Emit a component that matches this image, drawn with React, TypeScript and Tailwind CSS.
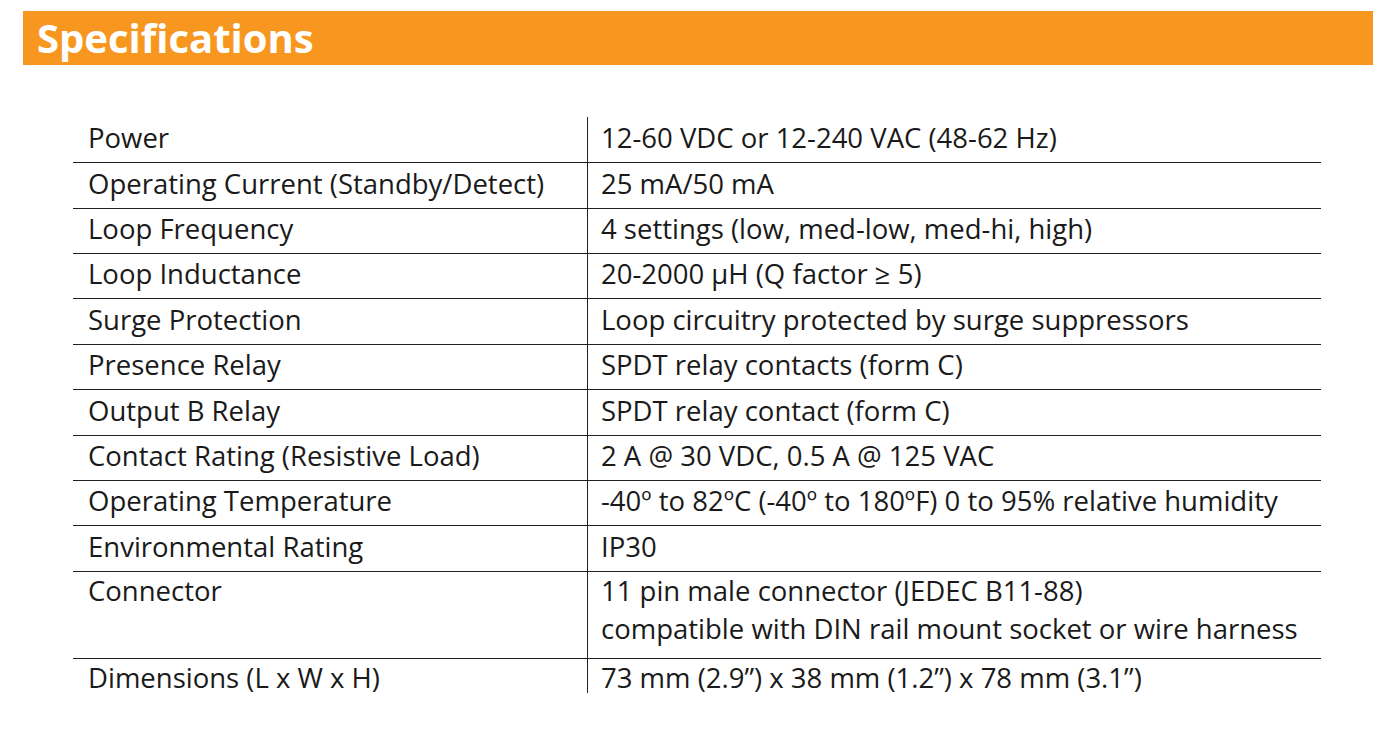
import React from 'react';

// row heights include the 1px bottom rule
const specs: { label: string; value: string[]; h: string }[] = [
    { label: 'Power', value: ['12-60 VDC or 12-240 VAC (48-62 Hz)'], h: 'h-[46px]' },
    { label: 'Operating Current (Standby/Detect)', value: ['25 mA/50 mA'], h: 'h-[46px]' },
    { label: 'Loop Frequency', value: ['4 settings (low, med-low, med-hi, high)'], h: 'h-[45px]' },
    { label: 'Loop Inductance', value: ['20-2000 µH (Q factor ≥ 5)'], h: 'h-[45px]' },
    { label: 'Surge Protection', value: ['Loop circuitry protected by surge suppressors'], h: 'h-[46px]' },
    { label: 'Presence Relay', value: ['SPDT relay contacts (form C)'], h: 'h-[45px]' },
    { label: 'Output B Relay', value: ['SPDT relay contact (form C)'], h: 'h-[46px]' },
    { label: 'Contact Rating (Resistive Load)', value: ['2 A @ 30 VDC, 0.5 A @ 125 VAC'], h: 'h-[45px]' },
    { label: 'Operating Temperature', value: ['-40º to 82ºC (-40º to 180ºF) 0 to 95% relative humidity'], h: 'h-[45px]' },
    { label: 'Environmental Rating', value: ['IP30'], h: 'h-[46px]' },
    {
        label: 'Connector',
        value: ['11 pin male connector (JEDEC B11-88)', 'compatible with DIN rail mount socket or wire harness'],
        h: 'h-[87px]',
    },
    { label: 'Dimensions (L x W x H)', value: ['73 mm (2.9”) x 38 mm (1.2”) x 78 mm (3.1”)'], h: 'h-[34px]' },
];

const App: React.FC = () => {
    return (
        <div className="min-h-[739px] w-[1394px] bg-white pt-[11px] font-['Open_Sans',sans-serif] text-[#1a1a1a]">
            <div className="ml-[23px] flex h-[54px] w-[1350px] items-center bg-[#f7971f] pl-[14px]">
                <h2 className="text-[40px] font-bold leading-none text-white">Specifications</h2>
            </div>

            <div className="ml-[73px] mt-[52px] w-[1248px] text-[27.5px] leading-[38px]">
                {specs.map((row, i) => {
                    const last = i === specs.length - 1;
                    const multi = row.value.length > 1;
                    return (
                        <div
                            key={row.label}
                            className={`flex ${row.h} ${last ? '' : 'border-b border-[#222]'}`}
                        >
                            <div
                                className={`flex w-[515px] shrink-0 border-r border-[#222] pl-[15px] ${
                                    last || multi ? '' : 'items-center pb-[4px]'
                                }`}
                            >
                                {row.label}
                            </div>
                            <div className={`pl-[13px] ${last || multi ? '' : 'flex items-center pb-[4px]'}`}>
                                {row.value.map((v) => (
                                    <div key={v}>{v}</div>
                                ))}
                            </div>
                        </div>
                    );
                })}
            </div>
        </div>
    );
};

export default App;
